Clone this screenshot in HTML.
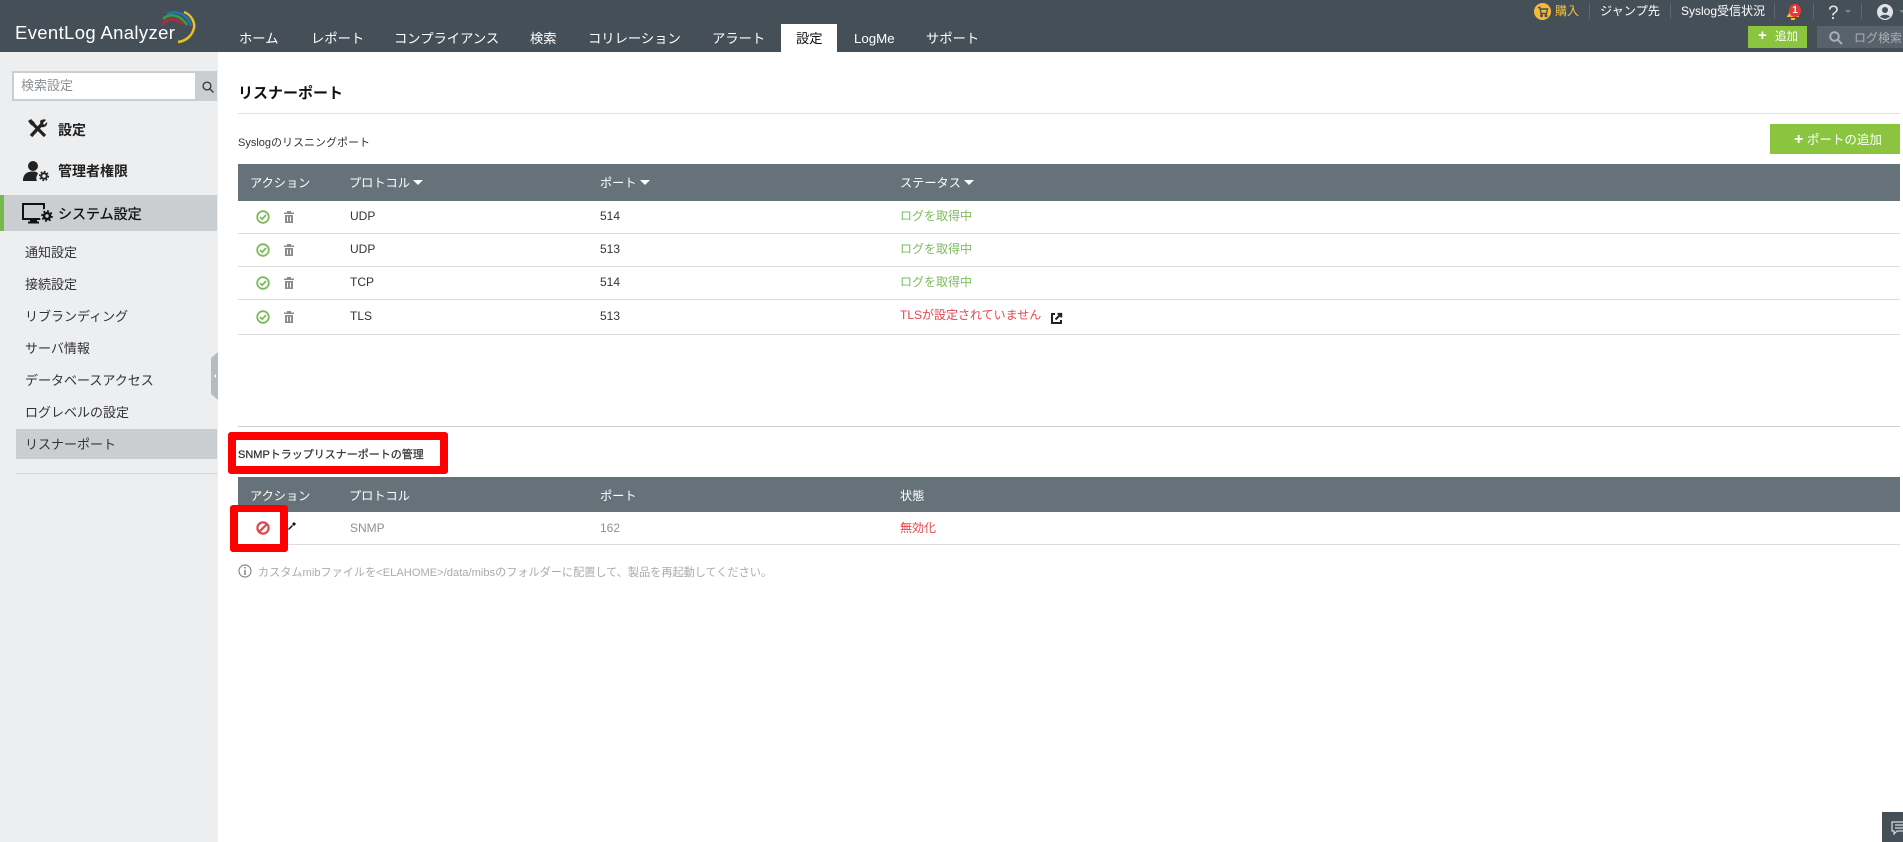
<!DOCTYPE html>
<html lang="ja"><head><meta charset="utf-8"><title>リスナーポート</title>
<style>
html,body{margin:0;padding:0;background:#fff}
body{width:1903px;height:842px;position:relative;overflow:hidden;font-family:"Liberation Sans","Noto Sans CJK JP",sans-serif;font-size:13px;color:#333}
.a{position:absolute;white-space:nowrap;line-height:18px}
.b{position:absolute}
svg{position:absolute;overflow:visible}
.nav{top:29px;color:#fff;font-size:13.3px;line-height:20px}
.th{color:#fff;font-size:12.2px}
.side{left:25px;font-size:13px;color:#333}
.sb{left:58px;font-size:14px;font-weight:bold;color:#222}
.line{position:absolute;left:238px;width:1662px;height:1px;background:#dfdfdf}
.car{display:inline-block;width:0;height:0;border:5px solid transparent;border-top:5px solid #fff;border-bottom:0;margin-left:3px;vertical-align:2px}
.sep{position:absolute;top:3px;width:1px;height:16px;background:#5c676e}
</style></head><body>

<div class="b" style="left:0;top:0;width:1903px;height:52px;background:#454f57"></div>
<div class="a" style="left:15px;top:21px;color:#fff;font-size:18.5px;line-height:24px;letter-spacing:.35px">EventLog Analyzer</div>
<svg style="left:0;top:0" width="210" height="52" fill="none" stroke-width="2.5">
<path d="M162 25C166 18 176 17 183 25" stroke="#b5293a"/>
<path d="M163 19C169 13 180 14 187 25" stroke="#3a9a4a"/>
<path d="M167 14C175 10 187 13 191 26" stroke="#1f76b5"/>
<path d="M184 12C192 15 195 23 194 28C192 36 186 41 178 42" stroke="#e8c128"/>
</svg>

<div class="a nav" style="left:239px">ホーム</div>
<div class="a nav" style="left:311px">レポート</div>
<div class="a nav" style="left:394px">コンプライアンス</div>
<div class="a nav" style="left:530px">検索</div>
<div class="a nav" style="left:588px">コリレーション</div>
<div class="a nav" style="left:712px">アラート</div>
<div class="b" style="left:781px;top:24px;width:56px;height:28px;background:#fff"></div>
<div class="a nav" style="left:796px;color:#111">設定</div>
<div class="a nav" style="left:854px">LogMe</div>
<div class="a nav" style="left:926px">サポート</div>

<!-- top right -->
<div class="b" style="left:1534px;top:3px;width:17px;height:17px;border-radius:50%;background:#f5b93a"></div>
<svg style="left:1537px;top:6px" width="12" height="12" fill="none" stroke="#454f57" stroke-width="1.4"><path d="M1 1.5H3L4 7.5H9.5L10.5 3H3.3"/><circle cx="4.5" cy="9.7" r=".8"/><circle cx="9" cy="9.7" r=".8"/></svg>
<div class="a" style="left:1555px;top:2px;color:#f2c13e;font-size:12px">購入</div>
<div class="sep" style="left:1589px"></div>
<div class="a" style="left:1600px;top:2px;color:#fff;font-size:12.2px">ジャンプ先</div>
<div class="sep" style="left:1670px"></div>
<div class="a" style="left:1681px;top:2px;color:#fff;font-size:12px">Syslog受信状況</div>
<div class="sep" style="left:1774px"></div>
<svg style="left:1786px;top:6px" width="14" height="14" fill="#f5b93a"><path d="M7 0C4 0 3 3 3 6C3 8 2 9 1 10V11H13V10C12 9 11 8 11 6C11 3 10 0 7 0Z"/><rect x="5" y="12" width="4" height="2"/></svg>
<div class="b" style="left:1789px;top:4px;width:12px;height:13px;border-radius:50%;background:#e53935;color:#fff;font-size:10px;font-weight:bold;line-height:13px;text-align:center">1</div>
<div class="sep" style="left:1813px"></div>
<div class="a" style="left:1828px;top:4px;color:#e4e7e9;font-size:19px;line-height:20px">?</div>
<div class="b" style="left:1845px;top:10px;width:0;height:0;border:3px solid transparent;border-top:3px solid #7a848b"></div>
<div class="sep" style="left:1861px"></div>
<div class="b" style="left:1877px;top:4px;width:16px;height:16px;border-radius:50%;background:#dfe3e6"></div>
<svg style="left:1877px;top:4px" width="16" height="16" fill="#454f57"><circle cx="8" cy="6" r="3"/><path d="M3 13C4 10 12 10 13 13L8 15Z"/></svg>
<div class="b" style="left:1899px;top:10px;width:0;height:0;border:3px solid transparent;border-top:3px solid #7a848b"></div>

<div class="b" style="left:1748px;top:26px;width:59px;height:22px;background:#8bc53f"></div>
<div class="a" style="left:1758px;top:27px;color:#fff;font-size:15px;font-weight:bold;line-height:18px">+</div>
<div class="a" style="left:1775px;top:28px;color:#fff;font-size:11.5px">追加</div>
<div class="b" style="left:1817px;top:26px;width:86px;height:22px;background:#57626a"></div>
<svg style="left:1829px;top:31px" width="14" height="14" fill="none" stroke="#a9b0b5" stroke-width="2"><circle cx="5.5" cy="5.5" r="4.3"/><path d="M8.8 8.8L13 13"/></svg>
<div class="a" style="left:1854px;top:29px;color:#aab1b6;font-size:12px">ログ検索</div>

<!-- sidebar -->
<div class="b" style="left:0;top:52px;width:218px;height:790px;background:#edeef0"></div>
<div class="b" style="left:12px;top:71px;width:183px;height:30px;background:#cbced1"></div>
<div class="b" style="left:14px;top:73px;width:181px;height:26px;background:#fff"></div>
<div class="b" style="left:195px;top:71px;width:22px;height:30px;background:#cbced1"></div>
<svg style="left:202px;top:81px" width="12" height="12" fill="none" stroke="#333" stroke-width="1.3"><circle cx="5" cy="5" r="3.9"/><path d="M7.8 7.8L11.5 11.5"/></svg>
<div class="a" style="left:21px;top:77px;color:#8a8f94;font-size:13px">検索設定</div>

<svg style="left:28px;top:119px" width="19" height="20" fill="#222" stroke="none">
<path d="M0 2L3 0L7 4L6 7L3 6Z"/>
<path d="M5 5L17 17" stroke="#222" stroke-width="3.2" fill="none"/>
<path d="M14 5L3 17" stroke="#222" stroke-width="3.4" fill="none"/>
<path d="M12 2C14 0 17 0 18 1L15 4L16 6L19 3C20 6 17 9 13 8Z"/>
</svg>
<div class="a sb" style="left:58px;top:121px">設定</div>
<svg style="left:23px;top:161px" width="27" height="21" fill="#222">
<circle cx="10" cy="5" r="5"/>
<path d="M0 20C0 13 4 10.5 10 10.5C13 10.5 15 11.5 15 13C13 15 13 18 14 20Z"/>
<circle cx="21" cy="15" r="2.8" fill="none" stroke="#222" stroke-width="2"/>
<circle cx="21" cy="15" r="4.4" fill="none" stroke="#222" stroke-width="1.4" stroke-dasharray="1.7 1.7"/>
</svg>
<div class="a sb" style="left:58px;top:162px">管理者権限</div>

<div class="b" style="left:0;top:195px;width:217px;height:36px;background:#cbced1"></div>
<div class="b" style="left:0;top:195px;width:4px;height:36px;background:#76bb4a"></div>
<svg style="left:22px;top:203px" width="32" height="24"><rect x="1" y="1" width="21" height="15" fill="none" stroke="#111" stroke-width="2"/><rect x="8" y="16" width="7" height="2.5" fill="#111"/><rect x="6" y="18.5" width="11" height="2" fill="#111"/><circle cx="25" cy="13" r="7.5" fill="#cbced1"/><circle cx="25" cy="13" r="3" fill="none" stroke="#111" stroke-width="2.6"/><circle cx="25" cy="13" r="5" fill="none" stroke="#111" stroke-width="1.6" stroke-dasharray="2 1.9"/></svg>
<div class="a sb" style="left:58px;top:205px;font-weight:normal;color:#111;-webkit-text-stroke:.3px #111">システム設定</div>

<div class="a side" style="top:244px">通知設定</div>
<div class="a side" style="top:276px">接続設定</div>
<div class="a side" style="top:308px">リブランディング</div>
<div class="a side" style="top:340px">サーバ情報</div>
<div class="a side" style="top:372px">データベースアクセス</div>
<div class="a side" style="top:404px">ログレベルの設定</div>
<div class="b" style="left:16px;top:429px;width:201px;height:30px;background:#cbced1"></div>
<div class="a side" style="top:436px">リスナーポート</div>
<div class="b" style="left:16px;top:473px;width:201px;height:1px;background:#d2d4d6"></div>
<svg style="left:211px;top:352px" width="7" height="48"><path d="M7 0V48L0 42V6Z" fill="#b5bbbf"/><path d="M5 22V26L3 24Z" fill="#fff"/></svg>

<!-- main -->
<div class="a" style="left:238px;top:85px;font-size:15px;font-weight:bold;color:#111">リスナーポート</div>
<div class="line" style="top:113px"></div>
<div class="a" style="left:238px;top:134px;font-size:11px;color:#333">Syslogのリスニングポート</div>
<div class="b" style="left:1770px;top:124px;width:130px;height:30px;background:#8bc53f"></div>
<div class="a" style="left:1794px;top:130px;color:#fff;font-size:12.5px;line-height:20px"><b style="font-size:16px">+</b> ポートの追加</div>

<div class="b" style="left:238px;top:164px;width:1662px;height:37px;background:#667279"></div>
<div class="a th" style="left:250px;top:174px">アクション</div>
<div class="a th" style="left:349px;top:174px">プロトコル<i class="car"></i></div>
<div class="a th" style="left:600px;top:174px">ポート<i class="car"></i></div>
<div class="a th" style="left:900px;top:174px">ステータス<i class="car"></i></div>

<div class="line" style="top:233px;background:#dcdcdc"></div>
<div class="line" style="top:266px;background:#dcdcdc"></div>
<div class="line" style="top:299px;background:#dcdcdc"></div>
<div class="line" style="top:334px;background:#dcdcdc"></div>

<svg style="left:256px;top:210px" width="14" height="14" fill="none" stroke="#7dba5e" stroke-width="1.8"><circle cx="7" cy="7" r="5.8"/><path d="M4 7L6.2 9.2L10 5"/></svg>
<svg style="left:284px;top:211px" width="10" height="12" fill="#8a8c8e"><rect x="3" y="0" width="4" height="1.5"/><rect x="0" y="1.5" width="10" height="1.5"/><path d="M1 4H9V12H1ZM3 5.5V10.5H4V5.5ZM6 5.5V10.5H7V5.5Z" fill-rule="evenodd"/></svg>
<svg style="left:256px;top:243px" width="14" height="14" fill="none" stroke="#7dba5e" stroke-width="1.8"><circle cx="7" cy="7" r="5.8"/><path d="M4 7L6.2 9.2L10 5"/></svg>
<svg style="left:284px;top:244px" width="10" height="12" fill="#8a8c8e"><rect x="3" y="0" width="4" height="1.5"/><rect x="0" y="1.5" width="10" height="1.5"/><path d="M1 4H9V12H1ZM3 5.5V10.5H4V5.5ZM6 5.5V10.5H7V5.5Z" fill-rule="evenodd"/></svg>
<svg style="left:256px;top:276px" width="14" height="14" fill="none" stroke="#7dba5e" stroke-width="1.8"><circle cx="7" cy="7" r="5.8"/><path d="M4 7L6.2 9.2L10 5"/></svg>
<svg style="left:284px;top:277px" width="10" height="12" fill="#8a8c8e"><rect x="3" y="0" width="4" height="1.5"/><rect x="0" y="1.5" width="10" height="1.5"/><path d="M1 4H9V12H1ZM3 5.5V10.5H4V5.5ZM6 5.5V10.5H7V5.5Z" fill-rule="evenodd"/></svg>
<svg style="left:256px;top:310px" width="14" height="14" fill="none" stroke="#7dba5e" stroke-width="1.8"><circle cx="7" cy="7" r="5.8"/><path d="M4 7L6.2 9.2L10 5"/></svg>
<svg style="left:284px;top:311px" width="10" height="12" fill="#8a8c8e"><rect x="3" y="0" width="4" height="1.5"/><rect x="0" y="1.5" width="10" height="1.5"/><path d="M1 4H9V12H1ZM3 5.5V10.5H4V5.5ZM6 5.5V10.5H7V5.5Z" fill-rule="evenodd"/></svg>

<div class="a" style="left:350px;top:207px;font-size:12px">UDP</div>
<div class="a" style="left:350px;top:240px;font-size:12px">UDP</div>
<div class="a" style="left:350px;top:273px;font-size:12px">TCP</div>
<div class="a" style="left:350px;top:307px;font-size:12px">TLS</div>
<div class="a" style="left:600px;top:207px;font-size:12px">514</div>
<div class="a" style="left:600px;top:240px;font-size:12px">513</div>
<div class="a" style="left:600px;top:273px;font-size:12px">514</div>
<div class="a" style="left:600px;top:307px;font-size:12px">513</div>
<div class="a" style="left:900px;top:207px;color:#7dba5e;font-size:12px">ログを取得中</div>
<div class="a" style="left:900px;top:240px;color:#7dba5e;font-size:12px">ログを取得中</div>
<div class="a" style="left:900px;top:273px;color:#7dba5e;font-size:12px">ログを取得中</div>
<div class="a" style="left:900px;top:306px;color:#e8434f;font-size:12px">TLSが設定されていません</div>
<svg style="left:1051px;top:313px" width="11" height="11" fill="none" stroke="#222" stroke-width="2"><path d="M4 1H1V10H10V7"/><path d="M4.5 6.5L10 1M6.5 .9H10.2V4.5"/></svg>

<div class="line" style="top:426px;background:#cfcfcf"></div>
<div class="a" style="left:238px;top:446px;font-size:11px;color:#333;-webkit-text-stroke:.25px #333">SNMPトラップリスナーポートの管理</div>
<div class="b" style="left:228px;top:432px;width:220px;height:42px;border:8px solid #ff0000;border-radius:3px;box-sizing:border-box"></div>

<div class="b" style="left:238px;top:477px;width:1662px;height:35px;background:#667279"></div>
<div class="a th" style="left:250px;top:487px">アクション</div>
<div class="a th" style="left:349px;top:487px">プロトコル</div>
<div class="a th" style="left:600px;top:487px">ポート</div>
<div class="a th" style="left:900px;top:487px">状態</div>
<div class="line" style="top:544px;background:#dcdcdc"></div>

<div class="b" style="left:230px;top:505px;width:58px;height:47px;border:8px solid #ff0000;border-top-width:7px;border-radius:3px;box-sizing:border-box;background:#fff"></div>
<svg style="left:256px;top:521px" width="14" height="14" fill="none" stroke="#e2474f" stroke-width="2.2"><circle cx="7" cy="7" r="5.6"/><path d="M3.2 10.8L10.8 3.2"/></svg>
<svg style="left:288px;top:522px" width="8" height="9" fill="#111"><path d="M0 7L4 3L5 4L1 8ZM4 2L6 4L8 2L6 0Z"/></svg>
<div class="a" style="left:350px;top:519px;color:#8d9296;font-size:12px">SNMP</div>
<div class="a" style="left:600px;top:519px;color:#8d9296;font-size:12px">162</div>
<div class="a" style="left:900px;top:519px;color:#e8434f;font-size:12px">無効化</div>

<svg style="left:238px;top:564px" width="14" height="14" fill="none" stroke="#888" stroke-width="1.2"><circle cx="7" cy="7" r="6"/><path d="M7 6V11" stroke-width="1.6"/><path d="M7 3V4.6" stroke-width="1.6"/></svg>
<div class="a" style="left:258px;top:564px;color:#a8abae;font-size:11.15px">カスタムmibファイルを&lt;ELAHOME&gt;/data/mibsのフォルダーに配置して、製品を再起動してください。</div>

<div class="b" style="left:1882px;top:812px;width:21px;height:30px;background:#454f57"></div>
<svg style="left:1891px;top:821px" width="12" height="14" fill="none" stroke="#d8dcdf" stroke-width="1.2"><path d="M12 1H1V10H3V13L6 10H12"/><path d="M4 4H12M4 7H12"/></svg>

</body></html>
